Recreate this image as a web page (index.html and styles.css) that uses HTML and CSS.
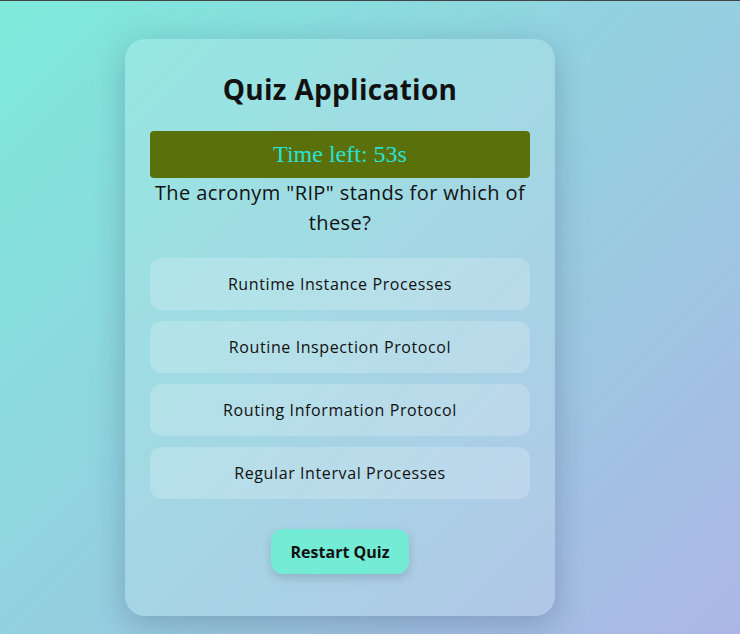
FILE: index.html
```html
<!DOCTYPE html>
<html lang="en">
<head>
    <meta charset="UTF-8">
    <meta name="viewport" content="width=device-width, initial-scale=1.0">
    <title>Quiz Application</title>
    <link rel="stylesheet" href="styles.css">
</head>
<body>
    <div class="quiz-container">
        <h1>Quiz Application</h1>

        <div id="timer" class="timer">Time left: 53s</div>

        <p id="question" class="question">The acronym "RIP" stands for which of these?</p>

        <div id="options" class="options">
            <button class="option">Runtime Instance Processes</button>
            <button class="option">Routine Inspection Protocol</button>
            <button class="option">Routing Information Protocol</button>
            <button class="option">Regular Interval Processes</button>
        </div>

        <button id="restartBtn" class="btn">Restart Quiz</button>
    </div>
</body>
</html>
```

FILE: styles.css
```css
:root {
    --mint: #74ebd5;
    --lavender: #acb6e5;
    --olive: #5a700a;
    --turquoise: #26e2d8;
    --dark: #111;
}

* {
    margin: 0;
    padding: 0;
    box-sizing: border-box;
    font-family: 'Open Sans', sans-serif;
}

html {
    border-top: 1px solid #444;
}

body {
    background: linear-gradient(135deg, #7deadb 0%, var(--lavender) 100%);
    color: var(--dark);
    min-height: calc(100vh - 1px);
    padding: 38px 0 19px 125px;
}

.quiz-container {
    width: 430px;
    padding: 30px 25px 42px;
    border-radius: 20px;
    background: rgba(255, 255, 255, 0.15);
    box-shadow: 0 8px 32px rgba(31, 38, 80, 0.25);
    text-align: center;
}

.quiz-container h1 {
    font-size: 28px;
    font-weight: 700;
    letter-spacing: 0.3px;
    line-height: 40px;
    margin-bottom: 22px;
}

.timer {
    background-color: var(--olive);
    color: var(--turquoise);
    font-family: 'Liberation Serif', serif;
    font-size: 24px;
    line-height: 47px;
    border-radius: 4px;
}

.question {
    font-size: 20px;
    letter-spacing: 0.4px;
    line-height: 30px;
    margin-bottom: 20px;
}

.options {
    display: flex;
    flex-direction: column;
    gap: 11px;
    margin-bottom: 30px;
}

.option {
    height: 52px;
    border: none;
    border-radius: 12px;
    background: rgba(255, 255, 255, 0.2);
    color: var(--dark);
    font-size: 16px;
    letter-spacing: 0.6px;
    cursor: pointer;
}

.btn {
    width: 138px;
    height: 45px;
    border: none;
    border-radius: 12px;
    background-color: var(--mint);
    color: var(--dark);
    font-size: 16px;
    font-weight: 700;
    box-shadow: 0 4px 10px rgba(0, 0, 0, 0.15);
    cursor: pointer;
}
```
